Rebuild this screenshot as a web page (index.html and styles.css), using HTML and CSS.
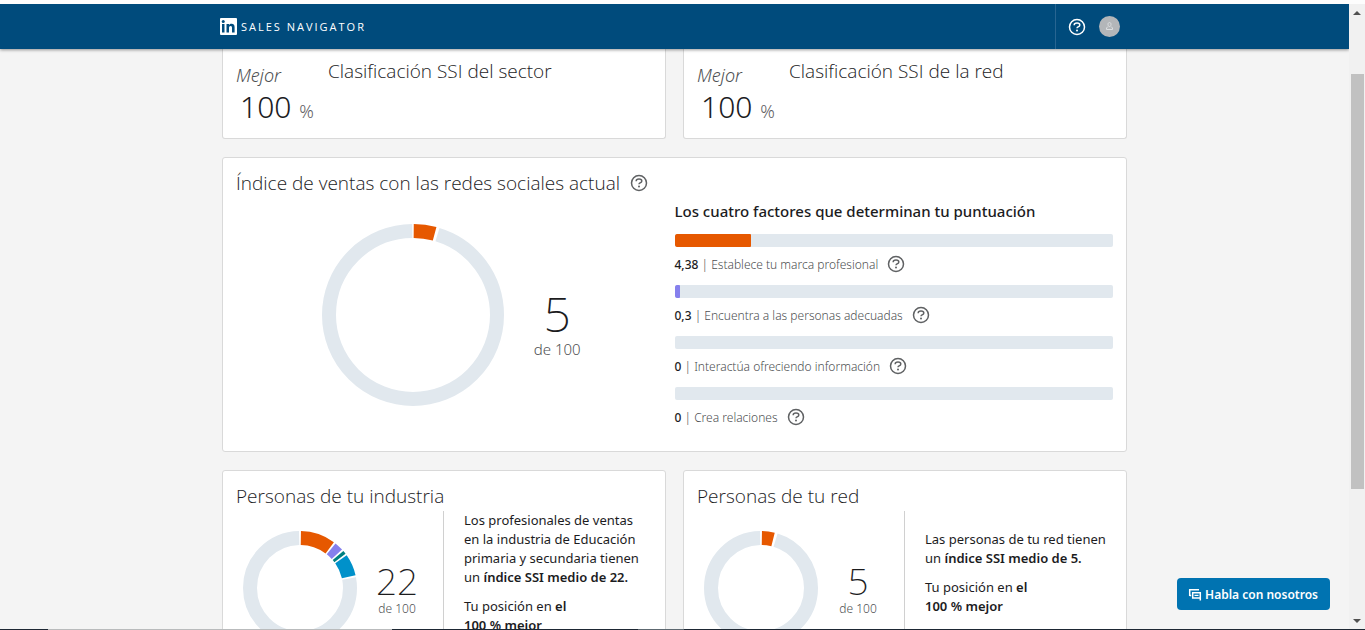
FILE: index.html
```html
<!DOCTYPE html>
<html lang="es">
<head>
<meta charset="utf-8">
<meta name="viewport" content="width=device-width, initial-scale=1">
<title>Sales Navigator</title>
<link rel="stylesheet" href="styles.css">
</head>
<body>
<svg class="defs" aria-hidden="true">
  <symbol id="help" viewBox="0 0 18 18">
    <circle cx="9" cy="9" r="7.5" fill="none" stroke="currentColor" stroke-width="1.5"/>
    <path d="M6.2 7.200V6.900C6.200 5.600 7.300 4.900 9 4.900s2.800.7 2.800 2c0 1.100-.7 1.500-1.500 1.800-.9.300-1.300.7-1.300 1.600" fill="none" stroke="currentColor" stroke-width="1.500"/>
    <circle cx="9" cy="12.500" r="1" fill="currentColor"/>
  </symbol>
</svg>
<div class="window">
  <div class="page">
    <header class="topbar">
      <div class="container topbar-inner">
        <a class="brand" href="#">
          <svg class="brand-logo" viewBox="0 0 17 17" aria-hidden="true">
            <rect width="17" height="17" rx="1" fill="#fff"/>
            <rect x="2" y="6" width="2.500" height="8.500" fill="#004b7c"/>
            <circle cx="3.250" cy="3.500" r="1.500" fill="#004b7c"/>
            <path d="M6.500 6H9v1.200C9.500 6.300 10.400 5.800 11.600 5.800c2.200 0 3 1.400 3 3.500v5.200H12V9.900C12 8.800 11.700 8 10.700 8 9.500 8 9 8.900 9 10v4.500H6.500z" fill="#004b7c"/>
          </svg>
          <span class="brand-name">SALES NAVIGATOR</span>
        </a>
        <nav class="tools">
          <button class="help help-light" type="button" aria-label="Ayuda"><svg><use href="#help"/></svg></button>
          <button class="avatar" type="button" aria-label="Tu perfil">
            <svg viewBox="0 0 21 21"><circle cx="10.500" cy="10.500" r="10.500" fill="#b3b6b9"/><path d="M10.500 6.500c1 0 1.500.8 1.500 1.800 0 1.200-.6 2.200-1.500 2.200S9 9.500 9 8.300c0-1 .5-1.800 1.500-1.800zM9 10.500 7.500 12v1.500h6V12L12 10.500" fill="none" stroke="#dcdfe1"/></svg>
          </button>
        </nav>
      </div>
    </header>
    <main class="content">
      <div class="container cards">
        <section class="card card-rank">
          <div class="rank">
            <p class="rank-label">Mejor</p>
            <p class="rank-value">100 <small>%</small></p>
          </div>
          <h2 class="title">Clasificación SSI del sector</h2>
        </section>
        <section class="card card-rank">
          <div class="rank">
            <p class="rank-label">Mejor</p>
            <p class="rank-value">100 <small>%</small></p>
          </div>
          <h2 class="title">Clasificación SSI de la red</h2>
        </section>

        <section class="card card-index">
          <div class="index-head">
            <h2 class="title">Índice de ventas con las redes sociales actual</h2>
            <button class="help" type="button" aria-label="Más información sobre el índice"><svg><use href="#help"/></svg></button>
          </div>
          <div class="index-chart">
            <svg class="ring-large" viewBox="0 0 182 182" role="img" aria-label="5 de 100">
              <g class="ring" transform="rotate(-90 91 91)">
                <circle class="c-rest" cx="91" cy="91" r="84" pathLength="360" stroke-dasharray="342.500 17.500" stroke-dashoffset="-17"/>
                <circle class="c-brand" cx="91" cy="91" r="84" pathLength="360" stroke-dasharray="14.500 345.500" stroke-dashoffset="-.5"/>
              </g>
            </svg>
            <p class="score score-large"><strong>5</strong><span>de 100</span></p>
          </div>
          <div class="factors">
            <h3 class="factors-title">Los cuatro factores que determinan tu puntuación</h3>
            <ul class="factor-list">
              <li>
                <div class="bar"><div class="fill b-brand" style="width:17.400%"></div></div>
                <div class="factor"><span><b>4,38</b> | Establece tu marca profesional</span><button class="help" type="button" aria-label="Más información sobre tu marca"><svg><use href="#help"/></svg></button></div>
              </li>
              <li>
                <div class="bar"><div class="fill b-find" style="width:1.200%"></div></div>
                <div class="factor"><span><b>0,3</b> | Encuentra a las personas adecuadas</span><button class="help" type="button" aria-label="Más información sobre encontrar personas"><svg><use href="#help"/></svg></button></div>
              </li>
              <li>
                <div class="bar"></div>
                <div class="factor"><span><b>0</b> | Interactúa ofreciendo información</span><button class="help" type="button" aria-label="Más información sobre interactuar"><svg><use href="#help"/></svg></button></div>
              </li>
              <li>
                <div class="bar"></div>
                <div class="factor"><span><b>0</b> | Crea relaciones</span><button class="help" type="button" aria-label="Más información sobre crear relaciones"><svg><use href="#help"/></svg></button></div>
              </li>
            </ul>
          </div>
        </section>

        <section class="card card-people">
          <h2 class="title">Personas de tu industria</h2>
          <div class="people">
            <div class="people-chart">
              <svg class="ring-small" viewBox="0 0 114 114" role="img" aria-label="22 de 100">
                <g class="ring" transform="rotate(-90 57 57)">
                  <circle class="c-rest" cx="57" cy="57" r="50" pathLength="360" stroke-dasharray="280 80" stroke-dashoffset="-79"/>
                  <circle class="c-brand" cx="57" cy="57" r="50" pathLength="360" stroke-dasharray="35.500 324.500" stroke-dashoffset="-1"/>
                  <circle class="c-find" cx="57" cy="57" r="50" pathLength="360" stroke-dasharray="9 351" stroke-dashoffset="-38.500"/>
                  <circle class="c-engage" cx="57" cy="57" r="50" pathLength="360" stroke-dasharray="3.500 356.500" stroke-dashoffset="-49.500"/>
                  <circle class="c-relate" cx="57" cy="57" r="50" pathLength="360" stroke-dasharray="22 338" stroke-dashoffset="-55"/>
                </g>
              </svg>
              <p class="score"><strong>22</strong><span>de 100</span></p>
            </div>
            <div class="people-text">
              <p>Los profesionales de ventas<br>en la industria de Educación<br>primaria y secundaria tienen<br>un <b>índice SSI medio de 22.</b></p>
              <p>Tu posición en <b>el<br>100 % mejor</b></p>
              <p>Sin cambios</p>
            </div>
          </div>
        </section>
        <section class="card card-people">
          <h2 class="title">Personas de tu red</h2>
          <div class="people">
            <div class="people-chart">
              <svg class="ring-small" viewBox="0 0 114 114" role="img" aria-label="5 de 100">
                <g class="ring" transform="rotate(-90 57 57)">
                  <circle class="c-rest" cx="57" cy="57" r="50" pathLength="360" stroke-dasharray="342 18" stroke-dashoffset="-17"/>
                  <circle class="c-brand" cx="57" cy="57" r="50" pathLength="360" stroke-dasharray="13 347" stroke-dashoffset="-1"/>
                </g>
              </svg>
              <p class="score"><strong>5</strong><span>de 100</span></p>
            </div>
            <div class="people-text">
              <p>Las personas de tu red tienen<br>un <b>índice SSI medio de 5.</b></p>
              <p>Tu posición en <b>el<br>100 % mejor</b></p>
              <p>Sin cambios</p>
            </div>
          </div>
        </section>
      </div>
    </main>
    <button class="chat" type="button">
      <svg viewBox="0 0 14 13" aria-hidden="true"><path d="M1.700 8V1.700H11M1.700 7.500h1.500M4.700 4.700h7.600V10H4.700zM12.300 9.500v3" fill="none" stroke="#fff" stroke-width="1.500"/><path d="M6.500 7.400h4" stroke="#fff" stroke-width="1.200"/></svg>
      <span>Habla con nosotros</span>
    </button>
  </div>
  <div class="scrollbar" aria-hidden="true">
    <svg viewBox="0 0 16 17"><path d="M8 7l4 4H4z" fill="#505050"/></svg>
    <div class="space-before"></div>
    <div class="thumb"></div>
    <div class="space-after"></div>
    <svg viewBox="0 0 16 17"><path d="M8 11L4 7h8z" fill="#505050"/></svg>
  </div>
</div>
</body>
</html>
```
FILE: styles.css
```css
* { box-sizing: border-box; }

body {
  margin: 0;
  font-family: "Noto Sans", "Open Sans", sans-serif;
  font-size: 13px;
  line-height: 19px;
  color: #1c1c1e;
  background: #f4f4f4;
}

h2, h3, p, ul { margin: 0; padding: 0; }
ul { list-style: none; }
button { padding: 0; border: 0; background: none; font: inherit; color: inherit; cursor: pointer; }
svg { display: block; }
b { font-weight: 600; }
.defs { position: absolute; width: 0; height: 0; }

/* Window frame */
.window {
  display: grid;
  grid-template-columns: 1fr 16px;
  grid-template-rows: minmax(0, 1fr) 1px;
  height: 100vh;
  border-top: 4px solid #fdfdfd;
  overflow: hidden;
}
.window::after {
  content: "";
  grid-column: 1 / -1;
  background: linear-gradient(90deg, #1d2733 48px, #b9bbbc 48px 392px, #1d2733 392px 638px, #5d6870 638px 684px, #1d2733 684px);
}
.page { display: flex; flex-direction: column; min-height: 0; overflow: hidden; }
.container { width: 100%; max-width: 905px; margin: 0 auto; }

/* Top bar */
.topbar {
  flex: none;
  background: #004b7c;
  box-shadow: 0 1px 3px rgba(0, 0, 0, .4);
  z-index: 1;
}
.topbar-inner { display: flex; justify-content: space-between; height: 45px; }
.brand { display: flex; align-items: center; gap: 4px; margin-left: -2px; color: #fff; text-decoration: none; }
.brand-logo { width: 17px; height: 17px; }
.brand-name { font-family: "Open Sans", sans-serif; font-size: 11px; font-weight: 500; letter-spacing: 2px; }
.tools { display: flex; align-items: center; gap: 13px; padding: 0 7px 0 12px; border-left: 1px solid #286591; }
.avatar svg { width: 21px; height: 21px; }

.help { flex: none; color: #5f6163; }
.help svg { width: 18px; height: 18px; }
.help-light { color: #fff; }

/* Cards */
.content { flex: 1; min-height: 0; overflow: hidden; }
.cards { display: grid; grid-template-columns: 1fr 1fr; gap: 18px 17px; }
.card { background: #fff; border: 1px solid #d9d9d9; border-radius: 3px; padding: 13px; }
.title { font-family: "Open Sans", sans-serif; font-size: 19px; line-height: 24px; font-weight: 300; }

.card-rank {
  display: flex;
  gap: 13px;
  height: 90px;
  padding-top: 10px;
  border-top: 0;
  border-radius: 0 0 3px 3px;
}
.rank { width: 79px; padding-top: 4px; white-space: nowrap; }
.rank-label { font-size: 18px; line-height: 24px; font-style: italic; font-weight: 300; color: #4e5052; }
.rank-value { padding-left: 4px; font-size: 30px; line-height: 40px; font-weight: 300; }
.rank-value small { font-size: 18px; color: #5f6163; }

/* Index card */
.card-index {
  grid-column: 1 / -1;
  display: grid;
  grid-template-columns: 1fr 1fr;
  grid-template-rows: 24px auto;
  padding-bottom: 24px;
}
.index-head { grid-column: 1 / -1; display: flex; align-items: center; gap: 10px; }
.index-chart { display: flex; justify-content: center; align-items: center; gap: 30px; padding: 28px 8px 20px 0; }
.ring-large { width: 182px; height: 182px; }
.ring circle { fill: none; stroke-width: 14px; }
.ring .c-rest { stroke: #e1e8ee; }
.ring .c-brand { stroke: #e65800; }
.ring .c-find { stroke: #8680ed; }
.ring .c-engage { stroke: #008080; }
.ring .c-relate { stroke: #0091ca; }

.score { display: flex; flex-direction: column; align-items: center; white-space: nowrap; }
.score strong { font-size: 37px; line-height: 38px; font-weight: 200; }
.score span { font-size: 12px; line-height: 18px; font-weight: 300; color: #4e5052; }
.score-large { padding-top: 18px; }
.score-large strong { font-size: 48px; line-height: 50px; }
.score-large span { font-size: 15px; line-height: 20px; }

.factors { padding-top: 6px; }
.factors-title { font-size: 15px; line-height: 20px; font-weight: 500; }
.factor-list { display: grid; gap: 11px; padding-top: 13px; }
.bar { height: 13px; border-radius: 2px; background: #e1e8ee; overflow: hidden; }
.fill { height: 100%; border-radius: 1px; }
.b-brand { background: #e65800; }
.b-find { background: #8680ed; }
.factor { display: flex; align-items: center; gap: 9px; height: 20px; margin-top: 7px; font-size: 12px; font-weight: 300; color: #4e5052; }
.factor b { font-weight: 500; color: #1c1c1e; }

/* People cards */
.card-people { display: flex; flex-direction: column; }
.people { flex: 1; display: grid; grid-template-columns: 208px 1fr; padding-top: 3px; }
.people-chart { display: flex; align-items: center; gap: 20px; padding-left: 7px; border-right: 1px solid #d0d0d0; }
.ring-small { flex: none; width: 114px; height: 114px; }
.people-chart .score { width: 40px; padding-top: 4px; }
.people-text { align-self: center; display: grid; gap: 10px; padding-left: 20px; white-space: nowrap; }

/* Chat button */
.chat {
  position: fixed;
  right: 35px;
  bottom: 20px;
  z-index: 2;
  display: flex;
  align-items: center;
  gap: 3px;
  height: 32px;
  padding: 0 12px 0 11px;
  border-radius: 4px;
  background: #0073b1;
  color: #fff;
  font-size: 12px;
  font-weight: 600;
}
.chat svg { width: 14px; height: 13px; }

/* Scrollbar */
.scrollbar { display: flex; flex-direction: column; min-height: 0; background: #f1f1f1; }
.scrollbar svg { flex: none; width: 16px; height: 17px; }
.space-before { flex: 53; }
.thumb { flex: 415; margin: 0 1px 0 2px; background: #c1c1c1; }
.space-after { flex: 123; }
```
